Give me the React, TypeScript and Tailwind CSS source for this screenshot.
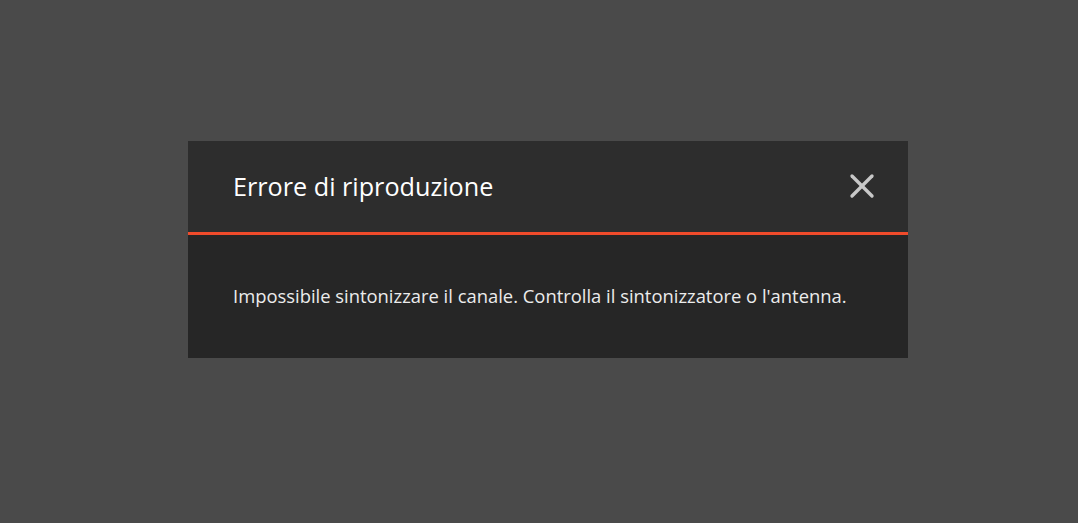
import { X } from 'lucide-react';

function ErrorDialog() {
  return (
    <div className="w-[720px] flex flex-col" style={{ fontFamily: '"Open Sans", "Noto Sans", sans-serif' }}>
      <div className="h-[91px] bg-[#2d2d2d] flex items-center justify-between pl-[45px] pr-[26px]">
        <h2 className="text-[25.2px] text-white leading-none">Errore di riproduzione</h2>
        <button className="text-[#c8c8c8] -mt-[2px]">
          <X size={40} strokeWidth={2} />
        </button>
      </div>
      <div className="h-[3px] bg-[#f04b2b]" />
      <div className="h-[123px] bg-[#262626] pl-[45px] pt-[52px]">
        <p className="text-[18.4px] text-[#ececec] leading-none">
          Impossibile sintonizzare il canale. Controlla il sintonizzatore o l'antenna.
        </p>
      </div>
    </div>
  );
}

export default function App() {
  return (
    <div className="w-[1078px] h-[523px] bg-[#4a4a4a] pl-[188px] pt-[141px]">
      <ErrorDialog />
    </div>
  );
}
